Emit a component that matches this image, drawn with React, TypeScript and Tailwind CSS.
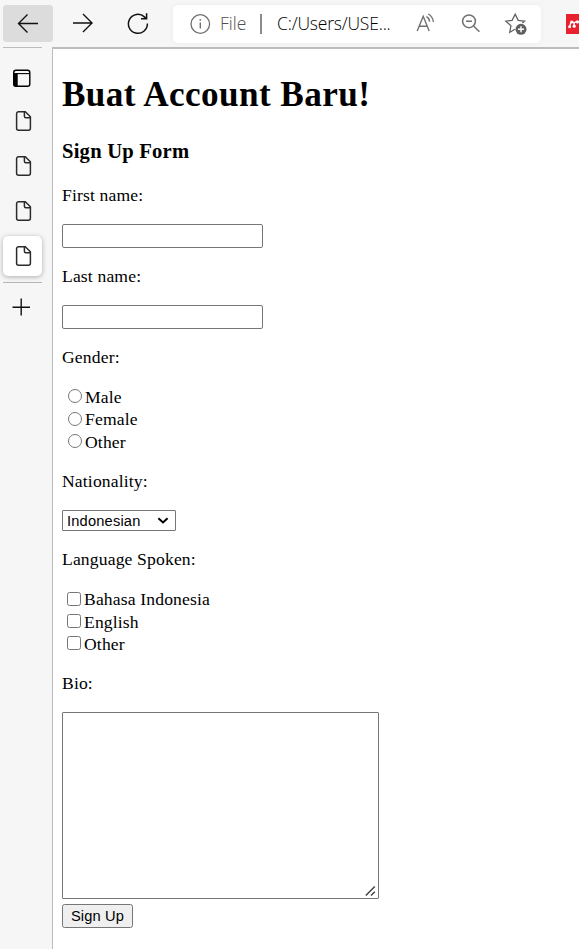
import React from 'react';

const PageIcon = () => (
  <svg width="18" height="22" viewBox="0 0 18 22" fill="none" stroke="#2b2b2b" strokeWidth="1.5">
    <path d="M3.6 1.7h6.7l5.1 5.1v11.4a2 2 0 0 1-2 2H3.6a2 2 0 0 1-2-2V3.7a2 2 0 0 1 2-2Z" />
    <path d="M9.4 1.7v4.5a1.5 1.5 0 0 0 1.5 1.5h4.5" />
  </svg>
);

function Toolbar() {
  return (
    <header className="flex h-[47px] shrink-0 items-start bg-[#f6f6f6] pl-[3px] pt-[5px]">
      <div className="flex h-[37px] w-[50px] items-center justify-center rounded-[3px] bg-[#dcdcdc]">
        <svg width="22" height="20" viewBox="0 0 22 20" fill="none" stroke="#111" strokeWidth="1.4">
          <path d="M21 9.5H1.5M10.5 .5L1.5 9.5l9 9" />
        </svg>
      </div>
      <svg width="22" height="20" viewBox="0 0 22 20" fill="none" stroke="#111" strokeWidth="1.4" className="ml-[19px] mt-2">
        <path d="M1 10h19.5M11 1l9 9-9 9" />
      </svg>
      <svg width="24" height="24" viewBox="0 0 24 24" fill="none" stroke="#111" strokeWidth="1.5" className="ml-[32px] mt-[6px]">
        <path d="M21.4 12.6A9.5 9.5 0 1 1 18.4 5.9L20.6 8M20.6 2.2v5.6H15" />
      </svg>
      <div className="ml-[23px] flex h-[38px] w-[368px] items-start rounded-[5px] bg-white font-['Open_Sans',sans-serif] text-[17.5px] shadow-[0_0_5px_rgba(0,0,0,0.05)]">
        <svg width="22" height="22" viewBox="0 0 22 22" fill="none" stroke="#707070" strokeWidth="1.3" className="ml-[16px] mt-2">
          <circle cx="11.3" cy="11" r="9.3" />
          <path d="M11.3 9.5v6" strokeWidth="1.4" />
          <circle cx="11.3" cy="6.9" r=".9" fill="#707070" stroke="none" />
        </svg>
        <span className="ml-[9px] mt-[6px] w-[30px] font-light leading-[24px] text-[#505050]">File</span>
        <div className="ml-[10px] mt-[9px] h-5 w-[2px] bg-[#8a8a8a]" />
        <span className="ml-[15px] mt-[6px] w-[115px] whitespace-nowrap font-light leading-[24px] tracking-[-0.2px] text-black">C:/Users/USE...</span>
        <svg width="22" height="22" viewBox="0 0 22 22" fill="none" stroke="#707070" strokeWidth="1.4" className="ml-[23px] mt-[6px]">
          <path d="M2.2 20L8.2 5.3 14.2 20M4.3 15.2h7.8M11.4 5.6q3 1.6 3.2 5M13.2 3q4.6 2.6 5.2 8" />
        </svg>
        <svg width="22" height="22" viewBox="0 0 22 22" fill="none" stroke="#707070" strokeWidth="1.5" className="ml-[23px] mt-[7px]">
          <circle cx="9" cy="9.3" r="6.4" />
          <path d="M6 9.3h6M13.6 14l5.8 5.7" />
        </svg>
        <svg width="24" height="24" viewBox="0 0 24 24" fill="none" stroke="#606060" strokeWidth="1.3" className="ml-[22px] mt-[7px]">
          <path d="M11 17.2l-5.2 3 1.1-6.4L1.8 9.2l6.3-.9L11.2 2.2l3 6.1 6.3.9-2.2 1.8" />
          <circle cx="17" cy="17.3" r="5.5" fill="#606060" stroke="none" />
          <path d="M17 14.3v6M14 17.3h6" stroke="white" strokeWidth="1.4" />
        </svg>
      </div>
      <svg width="13" height="20" viewBox="0 0 13 20" className="ml-[25px] mt-[9px] shrink-0">
        <rect width="20" height="20" fill="#e9202d" />
        <path d="M3.5 12.5c1-1 .6-2.3 1.2-3.5.7-1.6 2.2-1.4 3.4 0 1.2-1.4 2.6-1.6 4-1M8.2 9.5v2" fill="none" stroke="white" strokeWidth="1.4" />
        <circle cx="3.6" cy="12.8" r="1.5" fill="white" />
        <circle cx="8.2" cy="12.2" r="1.6" fill="white" />
        <circle cx="5.7" cy="7.9" r="1.5" fill="white" />
        <circle cx="11.4" cy="7.9" r="1.6" fill="white" />
      </svg>
    </header>
  );
}

function Sidebar() {
  return (
    <aside className="flex w-[52px] shrink-0 flex-col bg-[#f6f6f6] pl-[3px]">
      <div className="h-px w-[39px] bg-[#bcbcbc]" />
      <svg width="20" height="20" viewBox="0 0 20 20" className="ml-[9px] mt-[20px]">
        <rect x="1.7" y="2.2" width="16.1" height="16" rx="2.2" fill="none" stroke="black" strokeWidth="1.4" />
        <path d="M1.5 5.8h4.2v12.7H3.5a2 2 0 0 1-2-2Z" fill="black" />
        <path d="M2 5.6h16" stroke="black" strokeWidth="1.1" />
      </svg>
      <div className="ml-[11.5px] mt-[22px]"><PageIcon /></div>
      <div className="ml-[11.5px] mt-[23px]"><PageIcon /></div>
      <div className="ml-[11.5px] mt-[23px]"><PageIcon /></div>
      <div className="mt-[14px] flex h-[40px] w-[39px] items-center rounded-[5px] bg-white pl-[11.5px] shadow-[0_1px_5px_rgba(0,0,0,0.3)]"><PageIcon /></div>
      <div className="mt-[6px] h-px w-[39px] bg-[#b5b5b5]" />
      <svg width="18" height="18" viewBox="0 0 18 18" stroke="#111" strokeWidth="1.4" className="ml-[9px] mt-[15px]">
        <path d="M9.2 .5v17M.5 9.3h17.5" />
      </svg>
    </aside>
  );
}

const Label = ({ children, className }: { children: React.ReactNode; className: string }) => (
  <p className={`h-5 leading-5 ${className}`}>{children}</p>
);

const Option = ({ type, label, className, boxClass }: { type: 'radio' | 'checkbox'; label: string; className: string; boxClass: string }) => (
  <label className={`flex items-start leading-5 ${className}`}>
    <input
      type={type}
      name={type}
      className={`size-[14px] appearance-none border border-[#767676] bg-white mr-[3px] ${
        type === 'radio' ? 'ml-[6px] rounded-full' : 'ml-[5px] rounded-[2.5px]'
      } ${boxClass}`}
    />
    {label}
  </label>
);

function SignUpForm() {
  return (
    <form className="flex flex-col items-start pl-[9px] pt-[26px]">
      <h1 className="h-[40px] whitespace-nowrap text-[35.2px] font-bold leading-[40px] tracking-[0.4px]">Buat Account Baru!</h1>
      <h3 className="mt-[24px] h-6 text-[20.6px] font-bold leading-6 tracking-[0.22px]">Sign Up Form</h3>
      <Label className="mt-[22px]">First name:</Label>
      <input className="mt-[19px] h-6 w-[201px] rounded-[2px] border border-[#767676] bg-white" />
      <Label className="mt-[18px]">Last name:</Label>
      <input className="mt-[19px] h-6 w-[201px] rounded-[2px] border border-[#767676] bg-white" />
      <Label className="mt-[18px]">Gender:</Label>
      <Option type="radio" label="Male" className="mt-5 h-[22px]" boxClass="mt-[2px]" />
      <Option type="radio" label="Female" className="h-[23px]" boxClass="mt-[3px]" />
      <Option type="radio" label="Other" className="h-5" boxClass="mt-[2px]" />
      <Label className="mt-[19px]">Nationality:</Label>
      <button type="button" className="mt-[19px] flex h-[21px] w-[114px] items-center justify-between rounded-[1px] border border-[#767676] bg-white pl-[4px] pr-[6px] font-['Liberation_Sans',sans-serif] text-[14.67px] leading-[19px] tracking-[0.18px]">
        <span className="pt-px">Indonesian</span>
        <svg width="12" height="8" viewBox="0 0 12 8" fill="none" stroke="black" strokeWidth="2">
          <path d="M1.4 1.2L6 5.4l4.6-4.2" />
        </svg>
      </button>
      <Label className="mt-[18px]">Language Spoken:</Label>
      <Option type="checkbox" label="Bahasa Indonesia" className="mt-5 h-[23px]" boxClass="mt-[3px]" />
      <Option type="checkbox" label="English" className="h-[22px]" boxClass="mt-[2px]" />
      <Option type="checkbox" label="Other" className="h-5" boxClass="mt-[2px]" />
      <Label className="mt-[19px]">Bio:</Label>
      <div className="relative mt-[19px] h-[187px] w-[317px]">
        <textarea className="block h-full w-full resize-none rounded-[1px] border border-[#767676] bg-white" />
        <svg width="11" height="10" viewBox="0 0 11 10" stroke="#444" strokeWidth="1.5" className="absolute bottom-[3px] right-[3px]">
          <path d="M.8 9.5L9.8 .5M6 9.5l3.8-3.8" />
        </svg>
      </div>
      <button type="button" className="mt-[5px] h-6 w-[71px] rounded-[2.5px] border border-[#767676] bg-[#efefef] text-center font-['Liberation_Sans',sans-serif] text-[14.67px] leading-[22px] tracking-[0.15px]">Sign Up</button>
    </form>
  );
}

export default function App() {
  return (
    <div className="flex h-[949px] w-[579px] flex-col overflow-hidden bg-white">
      <Toolbar />
      <div className="flex min-h-0 flex-1">
        <Sidebar />
        <main className="flex-1 border-l border-t-2 border-[#bcbcbc] bg-white font-['Liberation_Serif',serif] text-[17.6px] tracking-[0.15px] text-black">
          <SignUpForm />
        </main>
      </div>
    </div>
  );
}
